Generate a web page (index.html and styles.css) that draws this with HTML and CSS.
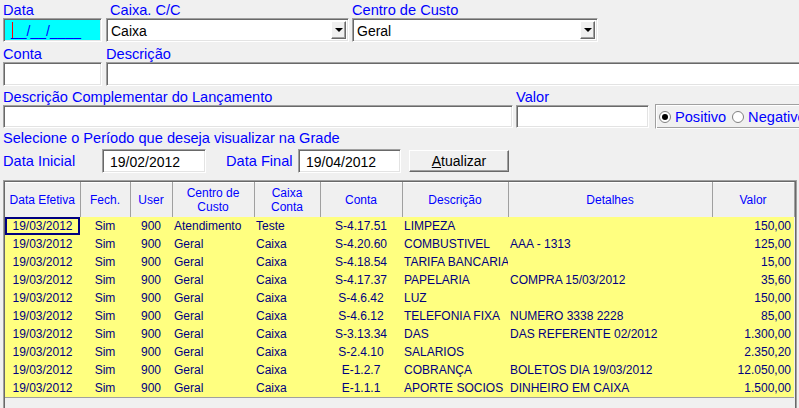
FILE: index.html
```html
<!DOCTYPE html>
<html lang="pt-BR">
<head>
  <meta charset="UTF-8">
  <title>Lançamentos</title>
  <link rel="stylesheet" href="styles.css">
</head>
<body>
  <div class="form">
    <!-- linha 1 -->
    <div class="row row-top">
      <div class="field w-data">
        <span class="lbl">Data</span>
        <div class="edit mask"><span class="caret"></span>__/__/____</div>
      </div>
      <div class="field w-caixa">
        <span class="lbl ind">Caixa. C/C</span>
        <div class="edit combo">Caixa<span class="drop"><i></i></span></div>
      </div>
      <div class="field w-centro">
        <span class="lbl">Centro de Custo</span>
        <div class="edit combo">Geral<span class="drop"><i></i></span></div>
      </div>
    </div>
    <!-- linha 2 -->
    <div class="row row-mid">
      <div class="field w-data">
        <span class="lbl">Conta</span>
        <div class="edit"></div>
      </div>
      <div class="field w-desc">
        <span class="lbl">Descrição</span>
        <div class="edit"></div>
      </div>
    </div>
    <!-- linha 3 -->
    <div class="row row-compl">
      <div class="field w-compl">
        <span class="lbl">Descrição Complementar do Lançamento</span>
        <div class="edit"></div>
      </div>
      <div class="field w-valor">
        <span class="lbl">Valor</span>
        <div class="edit"></div>
      </div>
      <div class="radios">
        <span class="radio on"></span><span class="rtxt">Positivo</span>
        <span class="radio"></span><span class="rtxt">Negativo</span>
      </div>
    </div>
    <div class="periodo-title">Selecione o Período que deseja visualizar na Grade</div>
    <div class="periodo">
      <span class="lbl pl">Data Inicial</span>
      <div class="edit date">19/02/2012</div>
      <span class="lbl pl2">Data Final</span>
      <div class="edit date">19/04/2012</div>
      <button class="btn"><u>A</u>tualizar</button>
    </div>
  </div>

  <div class="grid">
    <table>
      <colgroup>
        <col style="width:75px"><col style="width:50px"><col style="width:42px">
        <col style="width:82px"><col style="width:66px"><col style="width:82px">
        <col style="width:106px"><col style="width:204px"><col style="width:82px">
      </colgroup>
      <thead>
        <tr>
          <th>Data Efetiva</th><th>Fech.</th><th>User</th><th>Centro de<br>Custo</th>
          <th>Caixa<br>Conta</th><th>Conta</th><th>Descrição</th><th>Detalhes</th><th>Valor</th>
        </tr>
      </thead>
      <tbody>
        <tr><td class="c focus">19/03/2012</td><td class="c">Sim</td><td class="c">900</td><td>Atendimento</td><td>Teste</td><td class="c">S-4.17.51</td><td>LIMPEZA</td><td></td><td class="r">150,00</td></tr>
        <tr><td class="c">19/03/2012</td><td class="c">Sim</td><td class="c">900</td><td>Geral</td><td>Caixa</td><td class="c">S-4.20.60</td><td>COMBUSTIVEL</td><td>AAA - 1313</td><td class="r">125,00</td></tr>
        <tr><td class="c">19/03/2012</td><td class="c">Sim</td><td class="c">900</td><td>Geral</td><td>Caixa</td><td class="c">S-4.18.54</td><td>TARIFA BANCARIA</td><td></td><td class="r">15,00</td></tr>
        <tr><td class="c">19/03/2012</td><td class="c">Sim</td><td class="c">900</td><td>Geral</td><td>Caixa</td><td class="c">S-4.17.37</td><td>PAPELARIA</td><td>COMPRA 15/03/2012</td><td class="r">35,60</td></tr>
        <tr><td class="c">19/03/2012</td><td class="c">Sim</td><td class="c">900</td><td>Geral</td><td>Caixa</td><td class="c">S-4.6.42</td><td>LUZ</td><td></td><td class="r">150,00</td></tr>
        <tr><td class="c">19/03/2012</td><td class="c">Sim</td><td class="c">900</td><td>Geral</td><td>Caixa</td><td class="c">S-4.6.12</td><td>TELEFONIA FIXA</td><td>NUMERO 3338 2228</td><td class="r">85,00</td></tr>
        <tr><td class="c">19/03/2012</td><td class="c">Sim</td><td class="c">900</td><td>Geral</td><td>Caixa</td><td class="c">S-3.13.34</td><td>DAS</td><td>DAS REFERENTE 02/2012</td><td class="r">1.300,00</td></tr>
        <tr><td class="c">19/03/2012</td><td class="c">Sim</td><td class="c">900</td><td>Geral</td><td>Caixa</td><td class="c">S-2.4.10</td><td>SALARIOS</td><td></td><td class="r">2.350,20</td></tr>
        <tr><td class="c">19/03/2012</td><td class="c">Sim</td><td class="c">900</td><td>Geral</td><td>Caixa</td><td class="c">E-1.2.7</td><td>COBRANÇA</td><td>BOLETOS DIA 19/03/2012</td><td class="r">12.050,00</td></tr>
        <tr class="last"><td class="c">19/03/2012</td><td class="c">Sim</td><td class="c">900</td><td>Geral</td><td>Caixa</td><td class="c">E-1.1.1</td><td>APORTE SOCIOS</td><td>DINHEIRO EM CAIXA</td><td class="r">1.500,00</td></tr>
      </tbody>
    </table>
  </div>
</body>
</html>
```

FILE: styles.css
```css
:root {
  --bg: #f0f0f0;
  --lbl: #0000ff;
  --grid-text: #000080;
  --row-bg: #ffff80;
  --shadow: #a0a0a0;
  --dark: #696969;
}
* { box-sizing: border-box; margin: 0; padding: 0; }
body {
  background: var(--bg);
  font-family: "Liberation Sans", Arial, sans-serif;
  font-size: 14px;
  width: 799px;
  height: 408px;
  overflow: hidden;
}
.form { padding-left: 3px; width: 820px; }
.row { display: flex; }
.field { display: flex; flex-direction: column; flex: none; }
.lbl { color: var(--lbl); font-size: 14.6px; line-height: 16px; height: 16px; white-space: nowrap; }
.lbl.ind { padding-left: 4px; }

/* edits (sunken 3d) */
.edit {
  height: 24px;
  background: #fff;
  border: 1px solid;
  border-color: var(--shadow) #fff #fff var(--shadow);
  box-shadow: inset 1px 1px 0 var(--dark), inset -1px -1px 0 #e3e3e3;
  line-height: 21px;
  padding: 2px 0 0 4px;
  white-space: nowrap;
  position: relative;
}
.mask { background: #00ffff; color: var(--lbl); padding-left: 7px; }
.caret {
  position: absolute; left: 8px; top: 3px;
  width: 1px; height: 16px; background: #ff0000;
}
.combo { padding-left: 4px; color: #000; }
.drop {
  position: absolute; right: 2px; top: 2px;
  width: 15px; height: 18px;
  background: var(--bg);
  border: 1px solid;
  border-color: #fff var(--dark) var(--dark) #fff;
  box-shadow: inset -1px -1px 0 var(--shadow);
  display: flex; align-items: center; justify-content: center;
}
.drop i {
  display: block; width: 0; height: 0;
  border-left: 4px solid transparent;
  border-right: 4px solid transparent;
  border-top: 4px solid #000;
}

/* linha 1 */
.row-top { padding-top: 2px; }
.w-data { width: 99px; margin-right: 4px; }
.w-caixa { width: 243px; margin-right: 3px; }
.w-centro { width: 246px; }
.w-centro .edit { color: #000; }

/* linha 2 */
.row-mid { padding-top: 4px; }
.w-desc { width: 710px; }

/* linha 3 */
.row-compl { padding-top: 3px; }
.w-compl { width: 510px; margin-right: 3px; }
.w-compl .edit, .w-valor .edit { height: 23px; }
.w-valor { width: 133px; margin-right: 6px; }
.radios {
  align-self: flex-end;
  margin-bottom: -1px;
  height: 25px;
  width: 170px;
  border: 1px solid;
  border-color: var(--shadow) #fff #fff var(--shadow);
  box-shadow: inset 1px 1px 0 #fff, inset -1px -1px 0 var(--shadow);
  display: flex; align-items: center;
  padding-left: 3px;
}
.radio {
  width: 12px; height: 12px;
  border-radius: 50%;
  background: #fff;
  border: 1px solid #808080;
  display: flex; align-items: center; justify-content: center;
  margin-right: 4px;
}
.radio.on::after {
  content: ""; width: 6px; height: 6px; border-radius: 50%; background: #000;
}
.rtxt { color: var(--lbl); font-size: 14.6px; margin-right: 6px; line-height: 16px; }

.periodo-title { color: var(--lbl); font-size: 14.6px; line-height: 16px; margin-top: 2px; }
.periodo { display: flex; align-items: center; margin-top: 3px; height: 24px; }
.pl { width: 99px; }
.pl2 { margin-left: 20px; width: 72px; }
.date { width: 104px; color: #000; padding-left: 7px; }
.periodo .date:nth-of-type(2) { width: 103px; }
.btn {
  margin-left: 8px;
  width: 100px; height: 22px;
  background: var(--bg);
  border: 1px solid;
  border-color: #fff var(--dark) var(--dark) #fff;
  box-shadow: inset -1px -1px 0 var(--shadow);
  font-family: inherit; font-size: 14px; color: #000;
}

/* grade */
.grid {
  margin: 7px 0 0 3px;
  width: 794px;
  height: 240px;
  border: 1px solid;
  border-color: var(--shadow) var(--shadow) #fff var(--shadow);
  box-shadow: inset 1px 1px 0 var(--dark), inset -1px 0 0 var(--dark);
  padding: 1px 2px 0 1px;
}
table {
  table-layout: fixed;
  border-collapse: collapse;
  width: 789px;
  font-size: 12px;
}
th {
  height: 34px;
  background: var(--bg);
  border-right: 1px solid var(--shadow);
  border-top: 1px solid #fff;
  color: var(--lbl);
  font-weight: normal;
  line-height: 14px;
  vertical-align: middle;
  text-align: center;
}
td {
  height: 18px;
  background: var(--row-bg);
  color: var(--grid-text);
  line-height: 18px;
  padding: 0 2px;
  white-space: nowrap;
  overflow: hidden;
}
td.c { text-align: center; }
td.r { text-align: right; padding-right: 3px; }
td.focus { box-shadow: inset 1px 1px 0 var(--grid-text), inset 0 0 0 2px var(--grid-text); }
tr.last td { border-bottom: 1px solid var(--shadow); }
```
